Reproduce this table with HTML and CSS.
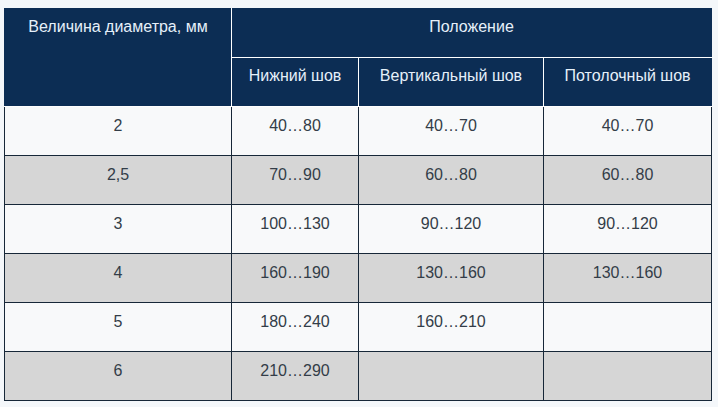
FILE: index.html
```html
<!DOCTYPE html>
<html lang="ru">
<head>
<meta charset="utf-8">
<title>Сила тока</title>
<link rel="stylesheet" href="styles.css">
</head>
<body>
<table class="grid">
  <colgroup>
    <col class="c1"><col class="c2"><col class="c3"><col class="c4">
  </colgroup>
  <thead>
    <tr class="row">
      <th rowspan="2" class="h h-first">Величина диаметра, мм</th>
      <th colspan="3" class="h h-last">Положение</th>
    </tr>
    <tr class="row">
      <th class="h">Нижний шов</th>
      <th class="h">Вертикальный шов</th>
      <th class="h h-last">Потолочный шов</th>
    </tr>
  </thead>
  <tbody>
    <tr class="row odd"><td>2</td><td>40…80</td><td>40…70</td><td>40…70</td></tr>
    <tr class="row even"><td>2,5</td><td>70…90</td><td>60…80</td><td>60…80</td></tr>
    <tr class="row odd"><td>3</td><td>100…130</td><td>90…120</td><td>90…120</td></tr>
    <tr class="row even"><td>4</td><td>160…190</td><td>130…160</td><td>130…160</td></tr>
    <tr class="row odd"><td>5</td><td>180…240</td><td>160…210</td><td></td></tr>
    <tr class="row even"><td>6</td><td>210…290</td><td></td><td></td></tr>
  </tbody>
</table>
</body>
</html>
```
FILE: styles.css
```css
html, body {
  background: #f4f7fa;
}
body {
  margin: 8px 4px;
  font-family: "Liberation Sans", Arial, sans-serif;
  font-size: 16px;
  line-height: 20px;
}
.grid {
  border-collapse: collapse;
  table-layout: fixed;
  width: 707px;
}
.c1 { width: 227px; }
.c2 { width: 127px; }
.c3 { width: 185px; }
.c4 { width: 168px; }
.row { height: 49px; }
.h {
  background: #0c2d54;
  color: #e6f0fa;
  font-weight: normal;
  text-align: center;
  vertical-align: top;
  padding: 8px 4px 0;
  border: 1px solid #ffffff;
}
thead tr:first-child .h { border-top-color: #0c2d54; }
.h-first { border-left-color: #0c2d54; }
.h-last { border-right-color: #0c2d54; }
td {
  color: #333d48;
  text-align: center;
  vertical-align: top;
  padding: 9px 4px 0;
  border: 1px solid #172738;
}
.odd td { background: #f8f9fa; }
.even td { background: #d6d6d6; }
```
